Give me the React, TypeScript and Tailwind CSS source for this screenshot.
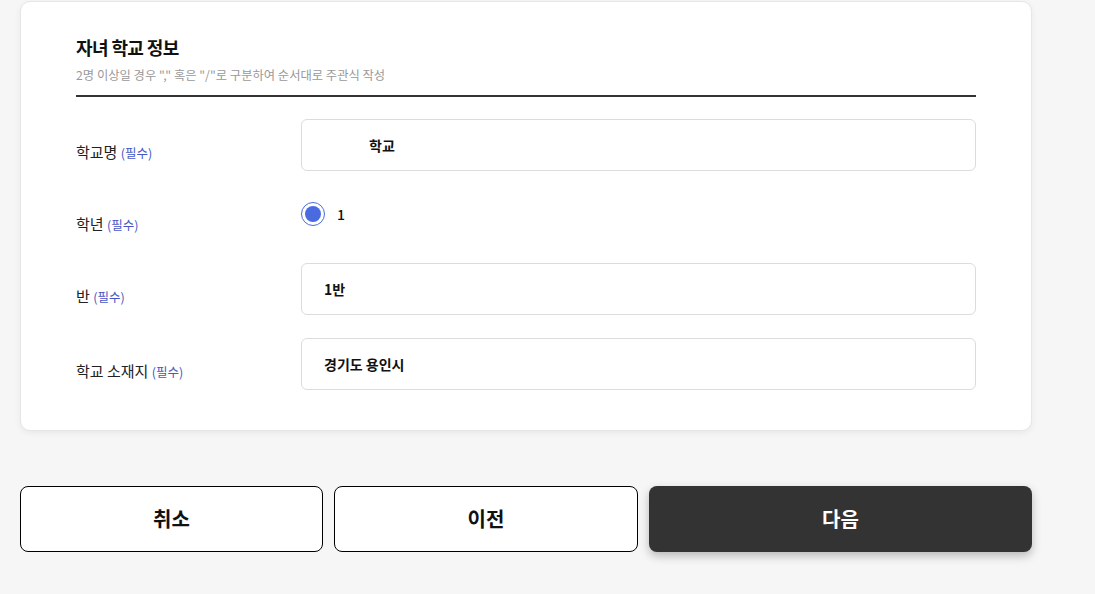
import React from "react";

const FONT = "font-['Noto_Sans_CJK_KR','Noto_Sans',sans-serif]";

function Label({ text }: { text: string }) {
  return (
    <div className="w-[225px] shrink-0 pt-[23px] text-[15px] leading-[20px] text-[#222]">
      {text} <span className="text-[12.5px] text-[#4656c4]">(필수)</span>
    </div>
  );
}

function Field({ children }: { children: React.ReactNode }) {
  return (
    <div className="flex h-[52px] flex-1 items-center rounded-[6px] border border-[#dcdcdc] bg-white px-[22px] text-[14px] font-semibold text-[#111]">
      {children}
    </div>
  );
}

export default function App() {
  return (
    <div className={`${FONT} min-h-[594px] bg-[#f6f6f6] px-[20px] pt-[1px]`}>
      <div className="w-[1012px] rounded-[10px] border border-[#e6e6e6] bg-white px-[55px] pt-[33px] pb-[40px] shadow-[0_2px_6px_rgba(0,0,0,0.06)]">
        <div className="border-b-2 border-[#333] pb-[11px]">
          <h2 className="text-[18px] font-bold leading-[24px] tracking-[-0.6px] text-[#111]">자녀 학교 정보</h2>
          <p className="mt-[7px] text-[12.3px] leading-[18px] text-[#999]">
            2명 이상일 경우 "," 혹은 "/"로 구분하여 순서대로 주관식 작성
          </p>
        </div>

        <div className="mt-[22px] flex">
          <Label text="학교명" />
          <Field>
            <span className="inline-block w-[45px]" />
            학교
          </Field>
        </div>

        <div className="mt-[20px] flex h-[52px]">
          <Label text="학년" />
          <div className="flex items-start gap-[12px] pt-[11px]">
            <span className="flex h-[24px] w-[24px] items-center justify-center rounded-full border-[1.5px] border-[#4a6ae0]">
              <span className="h-[16px] w-[16px] rounded-full bg-[#4a6ae0]" />
            </span>
            <span className="text-[14px] leading-[24px] font-medium text-[#111]">1</span>
          </div>
        </div>

        <div className="mt-[20px] flex">
          <Label text="반" />
          <Field>1반</Field>
        </div>

        <div className="mt-[23px] flex">
          <Label text="학교 소재지" />
          <Field>경기도 용인시</Field>
        </div>
      </div>

      <div className="mt-[55px] flex w-[1012px] gap-[11px]">
        <button className="h-[66px] w-[303px] rounded-[8px] border border-black bg-white text-[20px] font-bold text-[#111]">
          취소
        </button>
        <button className="h-[66px] w-[304px] rounded-[8px] border border-black bg-white text-[20px] font-bold text-[#111]">
          이전
        </button>
        <button className="h-[66px] flex-1 rounded-[8px] bg-[#333] text-[20px] font-bold text-white shadow-[0_4px_10px_rgba(0,0,0,0.25)]">
          다음
        </button>
      </div>
    </div>
  );
}
